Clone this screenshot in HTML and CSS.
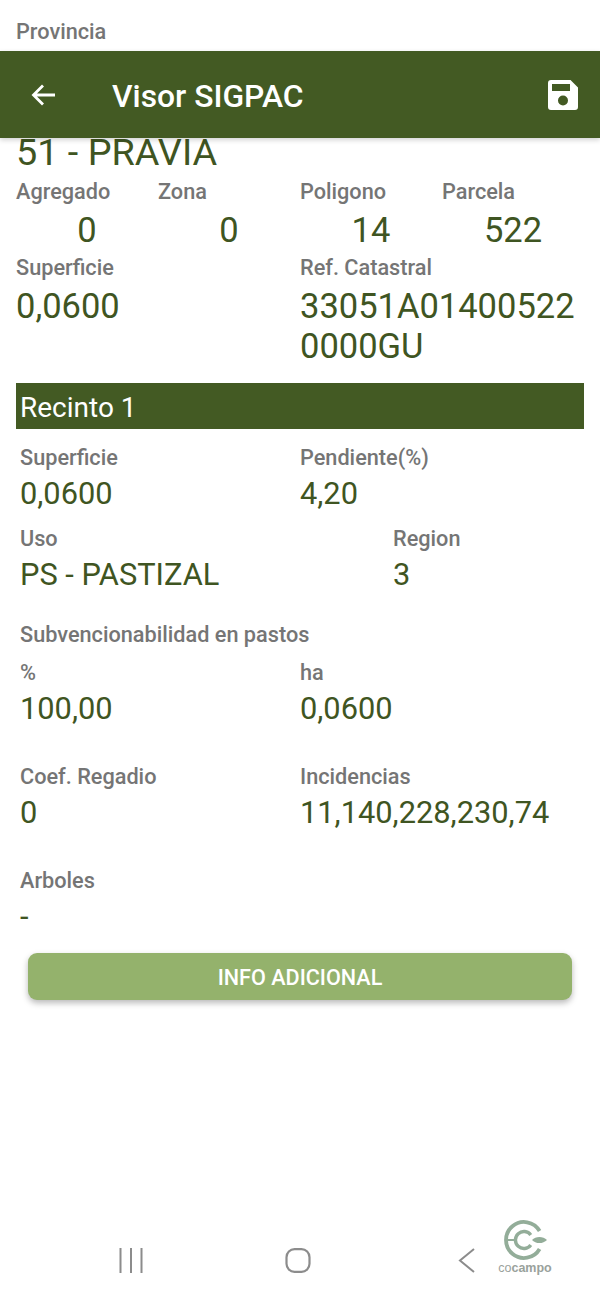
FILE: index.html
```html
<!DOCTYPE html>
<html lang="es">
<head>
<meta charset="utf-8">
<title>Visor SIGPAC</title>
<link rel="stylesheet" href="styles.css">
</head>
<body>
<div class="screen">
  <header class="appbar">
    <svg class="back" viewBox="0 0 28 28" width="28" height="28"><path d="M25 14H4M13 4.500L3.500 14 13 23.500" fill="none" stroke="#fff" stroke-width="2.800"/></svg>
    <h1 class="title">Visor SIGPAC</h1>
    <svg class="save" viewBox="0 0 30 30" width="30" height="30"><path fill-rule="evenodd" fill="#fff" d="M3 0H22.500L30 7.500V27a3 3 0 0 1-3 3H3a3 3 0 0 1-3-3V3a3 3 0 0 1 3-3ZM4 4V11H22V4ZM15 15.500a5 5 0 1 0 0 10 5 5 0 0 0 0-10Z"/></svg>
  </header>

  <main class="content">
    <div class="label province">Provincia</div>
    <div class="value municipality">51 - PRAVIA</div>

    <section class="row four">
      <div class="cell"><div class="label">Agregado</div><div class="value center">0</div></div>
      <div class="cell"><div class="label">Zona</div><div class="value center">0</div></div>
      <div class="cell"><div class="label">Poligono</div><div class="value center">14</div></div>
      <div class="cell"><div class="label">Parcela</div><div class="value center">522</div></div>
    </section>

    <section class="row two parcel">
      <div class="cell"><div class="label">Superficie</div><div class="value">0,0600</div></div>
      <div class="cell"><div class="label">Ref. Catastral</div><div class="value wrap">33051A014005220000GU</div></div>
    </section>

    <div class="band">Recinto 1</div>

    <section class="recinto">
      <div class="row two gap-a">
        <div class="cell"><div class="label">Superficie</div><div class="value">0,0600</div></div>
        <div class="cell"><div class="label">Pendiente(%)</div><div class="value">4,20</div></div>
      </div>
      <div class="row uso">
        <div class="cell"><div class="label">Uso</div><div class="value">PS - PASTIZAL</div></div>
        <div class="cell"><div class="label">Region</div><div class="value">3</div></div>
      </div>
      <div class="label subhead">Subvencionabilidad en pastos</div>
      <div class="row two gap-b">
        <div class="cell"><div class="label">%</div><div class="value">100,00</div></div>
        <div class="cell"><div class="label">ha</div><div class="value">0,0600</div></div>
      </div>
      <div class="row two gap-b">
        <div class="cell"><div class="label">Coef. Regadio</div><div class="value">0</div></div>
        <div class="cell"><div class="label">Incidencias</div><div class="value">11,140,228,230,74</div></div>
      </div>
      <div class="cell"><div class="label">Arboles</div><div class="value">-</div></div>
    </section>

    <button class="action" type="button">INFO ADICIONAL</button>
  </main>

  <nav class="navbar">
    <svg class="nav-recents" viewBox="0 0 24 25" width="24" height="25"><path d="M1.500 0V25M12 0V25M22.500 0V25" stroke="#8c8c8c" stroke-width="2" fill="none"/></svg>
    <svg class="nav-home" viewBox="0 0 26 25" width="26" height="25"><rect x="1.500" y="1.200" width="23" height="22.600" rx="8" fill="none" stroke="#8c8c8c" stroke-width="2.200"/></svg>
    <svg class="nav-back" viewBox="0 0 17 25" width="17" height="25"><path d="M16 1 2 12.500 16 24" fill="none" stroke="#8c8c8c" stroke-width="2"/></svg>
  </nav>

  <div class="brand">
    <svg viewBox="0 0 46 42" width="46" height="42">
      <g fill="none" stroke="#93ad99">
        <path d="M36.600 12A18 18 0 1 0 36.600 30" stroke-width="3.800"/>
        <path d="M27.800 16A8.500 8.500 0 1 0 27.800 26" stroke-width="3.400"/>
        <path d="M3 21H13" stroke-width="2"/>
      </g>
      <path d="M29 21C32.500 17 40 16.800 44 21 40 25.200 32.500 25 29 21Z" fill="#93ad99"/>
    </svg>
    <span class="brand-name"><span class="brand-light">co</span>campo</span>
  </div>
</div>
</body>
</html>
```
FILE: styles.css
```css
* { box-sizing: border-box; }

html, body {
  margin: 0;
  padding: 0;
  background: #fff;
}

.screen {
  position: relative;
  width: 600px;
  height: 1300px;
  overflow: hidden;
  font-family: Roboto, "Liberation Sans", sans-serif;
}

.appbar {
  position: absolute;
  top: 51px;
  left: 0;
  width: 100%;
  height: 87px;
  display: flex;
  align-items: center;
  padding: 0 22px 0 30px;
  background: #435a23;
  box-shadow: 0 2px 5px rgba(0, 0, 0, 0.18);
  z-index: 2;
}

.title {
  flex: 1;
  margin: 2px 0 0 54px;
  font-size: 31.8px;
  font-weight: 500;
  color: #fff;
}

.content {
  padding: 18px 16px 0;
}

.label {
  height: 26px;
  font-size: 21.7px;
  line-height: 28px;
  font-weight: 500;
  color: #757575;
}

.value {
  font-size: 34.5px;
  line-height: 40px;
  margin-top: 5px;
  color: #3f5522;
}

.center { text-align: center; }
.wrap { word-break: break-all; }

.municipality {
  margin-top: 88px;
  font-size: 37.8px;
}

.row { display: grid; }
.four { grid-template-columns: repeat(4, 142px); margin-top: 6px; }
.four .value { margin-top: 6px; }
.two { grid-template-columns: 284px 284px; }
.parcel { margin-top: 4px; }
.parcel .value { margin-top: 6px; }

.band {
  height: 46px;
  margin-top: 17px;
  padding-left: 4px;
  background: #435a23;
  color: #fff;
  font-size: 28px;
  line-height: 50px;
}

.recinto { padding-left: 4px; margin-top: 15px; }
.recinto .value { height: 36px; font-size: 30.8px; line-height: 38px; }
.recinto .two { grid-template-columns: 280px 280px; }
.uso { grid-template-columns: 373px 180px; }
.gap-a { margin-bottom: 14px; }
.gap-b { margin-bottom: 37px; }
.subhead { margin: 29px 0 12px; }

.action {
  display: block;
  width: 544px;
  height: 47px;
  margin: 19px 0 0 12px;
  padding: 2px 0 0;
  border: 0;
  border-radius: 9px;
  background: #94b26c;
  color: #fff;
  font-family: inherit;
  font-size: 21.6px;
  font-weight: 500;
  box-shadow: 0 3px 6px rgba(0, 0, 0, 0.28);
}

/* Android system navigation */
.navbar {
  position: absolute;
  left: 119px;
  top: 1248px;
  display: flex;
}
.nav-home { margin-left: 142px; }
.nav-back { margin-left: 147px; }

/* Watermark in the bottom corner */
.brand {
  position: absolute;
  left: 498px;
  top: 1219px;
  width: 54px;
  display: flex;
  flex-direction: column;
  align-items: center;
}

.brand svg { margin-left: 2px; }

.brand-name {
  font-family: "Liberation Sans", sans-serif;
  font-size: 12.5px;
  font-weight: 700;
  line-height: 12px;
  margin-top: 1px;
  color: #9aa29c;
}

.brand-light { font-weight: 400; }
```
